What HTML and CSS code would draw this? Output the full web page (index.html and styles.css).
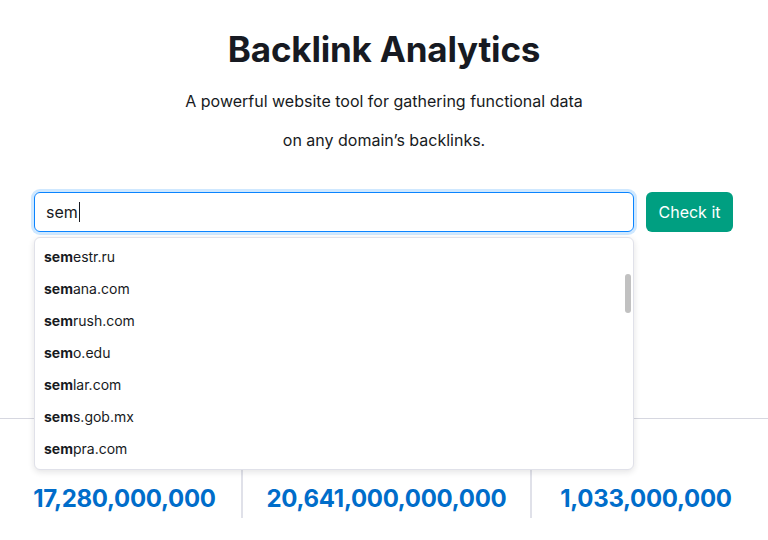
FILE: index.html
```html
<!DOCTYPE html>
<html>
<head>
<meta charset="utf-8">
<link rel="stylesheet" href="styles.css">
</head>
<body>
<div class="page">
  <header class="hero">
    <h1 class="title">Backlink Analytics</h1>
    <p class="sub">A powerful website tool for gathering functional data</p>
    <p class="sub">on any domain’s backlinks.</p>
  </header>
  <div class="search">
    <div class="field">
      <div class="input"><span class="typed">sem</span><span class="caret"></span></div>
      <div class="dropdown">
        <ul class="list">
          <li><b>sem</b>estr.ru</li>
          <li><b>sem</b>ana.com</li>
          <li><b>sem</b>rush.com</li>
          <li><b>sem</b>o.edu</li>
          <li><b>sem</b>lar.com</li>
          <li><b>sem</b>s.gob.mx</li>
          <li><b>sem</b>pra.com</li>
        </ul>
        <div class="thumb"></div>
      </div>
    </div>
    <button class="btn">Check it</button>
  </div>
  <div class="rule"></div>
  <div class="stats">
    <div class="stat">17,280,000,000</div>
    <div class="stat div">20,641,000,000,000</div>
    <div class="stat div">1,033,000,000</div>
  </div>
</div>
</body>
</html>
```
FILE: styles.css
```css
html, body { margin: 0; padding: 0; background: #fff; }
body { font-family: Inter, "Noto Sans", sans-serif; color: #171a22; overflow: hidden; width: 768px; height: 540px; }
.page { display: flex; flex-direction: column; }
.hero { display: flex; flex-direction: column; align-items: center; padding-top: 27px; }
.title { margin: 0; font-size: 35px; line-height: 44px; font-weight: 700; letter-spacing: -0.2px; color: #171a22; }
.sub { margin: 0; font-size: 16px; line-height: 39px; color: #171a22; }
.hero .sub:first-of-type { margin-top: 11px; }
.search { display: flex; gap: 12px; padding: 32px 0 0 34px; }
.field { position: relative; width: 600px; }
.input { box-sizing: border-box; height: 40px; border: 1px solid #0a84ff; border-radius: 6px; box-shadow: 0 0 0 3px #cfe8ff; padding: 0 11px; display: flex; align-items: center; font-size: 16px; }
.typed { color: #171a22; }
.caret { width: 1px; height: 20px; background: #171a22; margin-left: 1px; }
.btn { box-sizing: border-box; height: 40px; width: 87px; border: 0; border-radius: 6px; background: #009f81; color: #fff; font-family: Inter, sans-serif; font-size: 16px; padding: 0; }
.dropdown { position: absolute; left: 0; top: 45px; width: 600px; height: 233px; box-sizing: border-box; background: #fff; border: 1px solid #e0e1e9; border-radius: 6px; box-shadow: 0 2px 6px rgba(25, 27, 35, 0.12); z-index: 2; overflow: hidden; }
.list { list-style: none; margin: 0; padding: 3px 0 0 0; }
.list li { height: 32px; line-height: 32px; padding-left: 9px; font-size: 14px; color: #171a22; }
.list b { font-weight: 700; }
.thumb { position: absolute; right: 2px; top: 36px; width: 6px; height: 39px; border-radius: 3px; background: #c1c1c1; }
.rule { height: 1px; background: #d6d7e0; margin-top: 186px; }
.stats { display: grid; grid-template-columns: 233px 289px 230px; margin: 39px 8px 0 8px; }
.stat { text-align: center; font-size: 24px; font-weight: 700; color: #006dca; line-height: 30px; padding: 26px 0 4px; letter-spacing: -0.3px; }
.stat.div { border-left: 2px solid #e0e1e9; }
```
